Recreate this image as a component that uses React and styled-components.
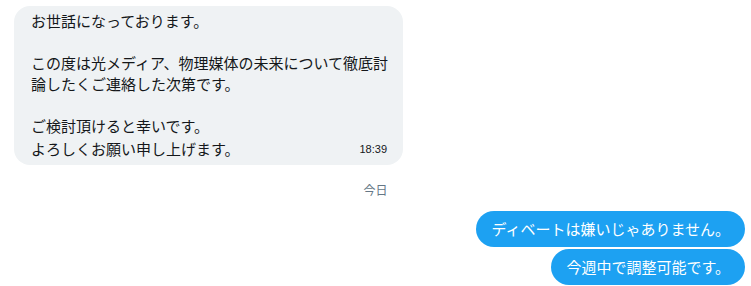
import React from "react";
import styled, { createGlobalStyle } from "styled-components";

const GlobalStyle = createGlobalStyle`
  body {
    margin: 0;
    background: #fff;
    font-family: "Noto Sans CJK JP", "Noto Sans", sans-serif;
    color: #14171a;
  }
`;

const Thread = styled.div`
  display: flex;
  flex-direction: column;
  padding: 6px 6px 0 14px;
`;

const Received = styled.div`
  align-self: flex-start;
  width: 360px;
  background: #eff2f4;
  border-radius: 16px;
  padding: 4px 12px 5px 17px;
  font-size: 15px;
  line-height: 21px;
`;

const Line = styled.div`
  min-height: 21px;
  white-space: nowrap;
`;

const LastLine = styled(Line)`
  display: flex;
  justify-content: space-between;
  align-items: center;
`;

const Time = styled.span`
  font-family: "Liberation Sans", Arial, sans-serif;
  font-size: 11px;
  color: #14171a;
  margin: 3px 4px 0 0;
`;

const DayLabel = styled.div`
  align-self: center;
  margin: 15px 0 0 -8px;
  font-size: 12px;
  line-height: 20px;
  color: #657786;
`;

const Sent = styled.div`
  align-self: flex-end;
  background: #1da1f2;
  color: #fff;
  font-size: 15px;
  line-height: 20px;
  padding: 8px 15px;
  border-radius: 18px;
  margin-top: ${(p) => (p.$first ? "11px" : "2px")};
  white-space: nowrap;
`;

const lines = [
  "お世話になっております。",
  "",
  "この度は光メディア、物理媒体の未来について徹底討",
  "論したくご連絡した次第です。",
  "",
  "ご検討頂けると幸いです。",
];

const App = () => {
  return (
    <>
      <GlobalStyle />
      <Thread>
        <Received>
          {lines.map((l, i) => (
            <Line key={i}>{l}</Line>
          ))}
          <LastLine>
            <span>よろしくお願い申し上げます。</span>
            <Time>18:39</Time>
          </LastLine>
        </Received>
        <DayLabel>今日</DayLabel>
        <Sent $first>ディベートは嫌いじゃありません。</Sent>
        <Sent>今週中で調整可能です。</Sent>
      </Thread>
    </>
  );
};

export default App;
